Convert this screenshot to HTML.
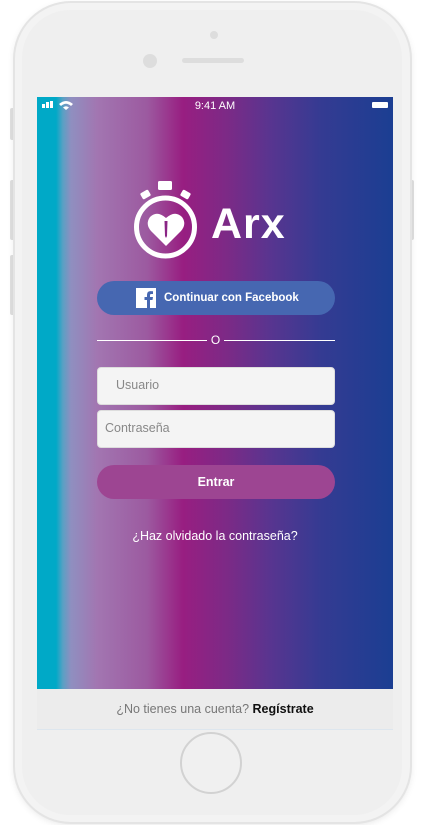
<!DOCTYPE html>
<html><head><meta charset="utf-8"><style>
html,body{margin:0;padding:0;width:424px;height:825px;background:#fff;overflow:hidden;font-family:"Liberation Sans",sans-serif}
.phone{position:absolute;left:15px;top:3px;width:395px;height:819px;border-radius:56px;background:#f3f3f3;box-shadow:0 0 0 2px #e4e4e4,0 2px 8px rgba(0,0,0,.12)}
.inner{position:absolute;left:22px;top:10px;width:380px;height:805px;border-radius:48px;background:#efefef}
.btn{position:absolute;background:#e0e0e0;border-radius:2px}
.screen{position:absolute;left:37px;top:97px;width:356px;height:592px;background:linear-gradient(90deg,#00a9c7 0px,#00a9c7 19px,#5aa0c4 26px,#8f8fc0 34px,#a276b1 60px,#9c5aa0 110px,#981e81 146px,#7c2a86 190px,#573590 235px,#343b92 285px,#1b3e92 356px)}
.footer{position:absolute;left:37px;top:689px;width:356px;height:40px;background:#ececec;border-bottom:1px solid #dde6ee;font-size:12.5px;color:#777;text-align:center;line-height:40px}
.footer b{color:#111}
.sb{position:absolute;top:97px;left:37px;width:356px;height:18px;color:#fff;font-size:11px}
.fb{position:absolute;left:97px;top:281px;width:238px;height:34px;border-radius:17px;background:#4667b1;color:#fff;font-weight:bold;font-size:11.5px;line-height:34px}
.inp{position:absolute;left:97px;width:236px;height:36px;border-radius:4px;background:#f4f4f4;border:1px solid #ddd;color:#888;font-size:12.5px;line-height:34px}
.entrar{position:absolute;left:97px;top:465px;width:238px;height:34px;border-radius:17px;background:#9d4592;color:#fff;font-weight:bold;font-size:12.5px;text-align:center;line-height:34px}
</style></head><body>
<div class="btn" style="left:10px;top:108px;width:5px;height:32px"></div>
<div class="btn" style="left:10px;top:180px;width:5px;height:60px"></div>
<div class="btn" style="left:10px;top:255px;width:5px;height:60px"></div>
<div class="btn" style="left:409px;top:180px;width:5px;height:60px"></div>
<div class="phone"></div>
<div class="inner"></div>
<div style="position:absolute;left:210px;top:31px;width:8px;height:8px;border-radius:50%;background:#ddd"></div>
<div style="position:absolute;left:143px;top:54px;width:14px;height:14px;border-radius:50%;background:#ddd"></div>
<div style="position:absolute;left:182px;top:58px;width:62px;height:5px;border-radius:3px;background:#ddd"></div>
<div style="position:absolute;left:180px;top:732px;width:62px;height:62px;border-radius:50%;border:2px solid #d2d2d2;box-sizing:border-box;background:#f0f0f0"></div>
<div class="screen"></div>
<div class="sb">
 <div style="position:absolute;left:5px;top:7px;width:3px;height:4px;background:#fff"></div>
 <div style="position:absolute;left:9px;top:5px;width:3px;height:6px;background:#fff"></div>
 <div style="position:absolute;left:13px;top:4px;width:3px;height:7px;background:#fff"></div>
 <svg style="position:absolute;left:21px;top:3px" width="16" height="10" viewBox="0 0 16 10"><path d="M1 4 Q8 -2 15 4 L13 6 Q8 1.5 3 6Z M5 7.5 Q8 5 11 7.5 L8 10Z" fill="#fff"/></svg>
 <div style="position:absolute;left:0;width:356px;top:3px;text-align:center">9:41 AM</div>
 <div style="position:absolute;left:335px;top:5px;width:16px;height:6px;background:#fff;border-radius:1px"></div>
</div>
<svg style="position:absolute;left:125px;top:175px" width="180" height="90" viewBox="125 175 180 90">
 <circle cx="165.5" cy="227" r="29" fill="none" stroke="#fff" stroke-width="5"/>
 <rect x="158" y="181" width="14" height="9" rx="1.5" fill="#fff"/>
 <rect x="141" y="191" width="9" height="7" rx="1.5" fill="#fff" transform="rotate(-30 145.5 194.5)"/>
 <rect x="181" y="191" width="9" height="7" rx="1.5" fill="#fff" transform="rotate(30 185.5 194.5)"/>
 <path d="M166 246 L151 231 Q145 224 150 217 Q157 210 166 218 Q175 210 182 217 Q187 224 181 231 Z" fill="#fff"/>
 <path d="M164.5 221 L167.5 221 L167 236 L166 238 L165 236 Z" fill="#8a2585"/>
</svg>
<div style="position:absolute;left:211px;top:199px;color:#fff;font-size:43px;font-weight:bold;letter-spacing:1px;line-height:50px">Arx</div>
<div class="fb"><svg style="position:absolute;left:39px;top:7px" width="20" height="20" viewBox="0 0 20 20"><rect width="20" height="20" fill="#fff"/><path d="M14 20 V12 H16.5 L17 9 H14 V7.2 Q14 6 15.3 6 H17 V3.3 Q15.8 3.1 14.6 3.1 Q11 3.1 11 6.8 V9 H8.5 V12 H11 V20Z" fill="#4667b1"/></svg><span style="position:absolute;left:67px">Continuar con Facebook</span></div>
<div style="position:absolute;left:97px;top:340px;width:110px;height:1px;background:#fff"></div>
<div style="position:absolute;left:224px;top:340px;width:111px;height:1px;background:#fff"></div>
<div style="position:absolute;left:207px;top:333px;width:17px;text-align:center;color:#fff;font-size:12px">O</div>
<div class="inp" style="top:367px"><span style="margin-left:18px">Usuario</span></div>
<div class="inp" style="top:410px"><span style="margin-left:7px">Contraseña</span></div>
<div class="entrar">Entrar</div>
<div style="position:absolute;left:37px;width:356px;top:529px;text-align:center;color:#fff;font-size:12.5px">¿Haz olvidado la contraseña?</div>
<div class="footer">¿No tienes una cuenta? <b>Regístrate</b></div>
</body></html>
